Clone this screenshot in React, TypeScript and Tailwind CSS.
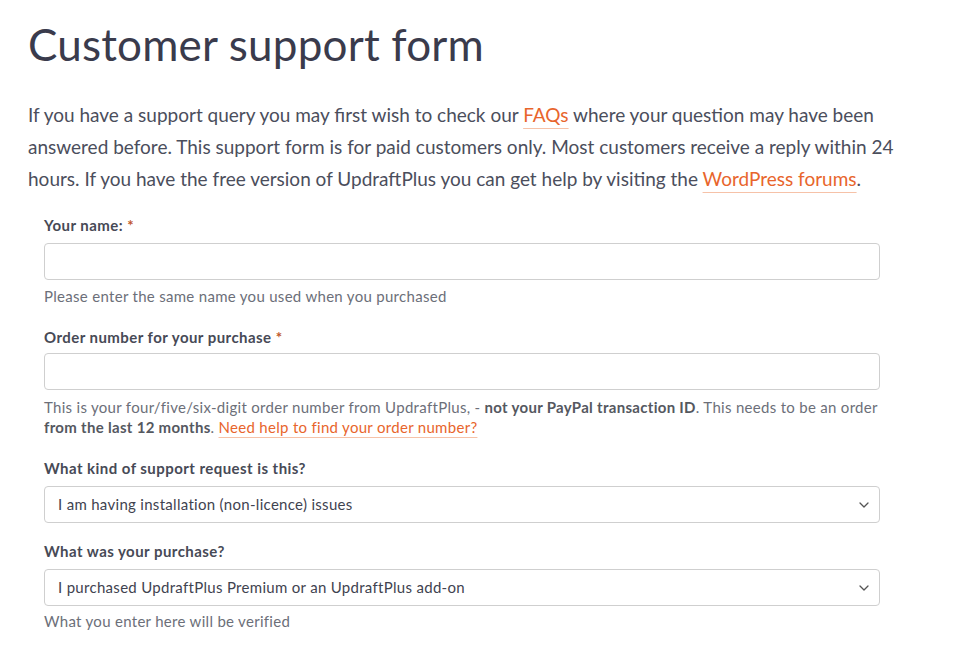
import React from "react";

const font = { fontFamily: "Lato, 'Noto Sans', sans-serif" };

function Chevron() {
  return (
    <svg width="10" height="6" viewBox="0 0 10 6" className="absolute right-[6px] top-1/2 -translate-y-1/2" fill="none">
      <path d="M1 1l4 4 4-4" stroke="#555" strokeWidth="1.3" strokeLinecap="round" strokeLinejoin="round" />
    </svg>
  );
}

function Select({ value }: { value: string }) {
  return (
    <div className="relative h-[37px] w-full rounded-[4px] border border-[#cfcfcf] bg-white">
      <div className="flex h-full items-center px-[13px] text-[15px] tracking-[0.3px] text-[#3f4350]">{value}</div>
      <div className="absolute right-[4px] top-1/2 -translate-y-1/2 h-[20px] w-[18px]">
        <Chevron />
      </div>
    </div>
  );
}

const label = "text-[15px] leading-[20px] font-bold tracking-[0.45px] text-[#474a56]";
const help = "text-[15px] leading-[20px] tracking-[0.3px] text-[#6c6f79]";

export default function App() {
  return (
    <div className="min-h-[645px] w-full bg-white" style={font}>
      <div className="pl-[28px] pt-[17px] w-[900px]">
        <h1 className="text-[44px] leading-[54px] font-normal text-[#3a3b4c] tracking-[0.2px]">Customer support form</h1>
        <p className="mt-[28px] text-[19px] leading-[32px] text-[#4b4e5c] w-[870px]">
          If you have a support query you may first wish to check our{" "}
          <a className="text-[#e8652c] underline decoration-[#f6c2a8] underline-offset-[6px]">FAQs</a> where your question may have been
          answered before. This support form is for paid customers only. Most customers receive a reply within 24
          hours. If you have the free version of UpdraftPlus you can get help by visiting the{" "}
          <a className="text-[#e8652c] underline decoration-[#f6c2a8] underline-offset-[6px]">WordPress forums</a>.
        </p>
        <div className="mt-[20px] pl-[16px] w-[852px] flex flex-col">
          <label className={label}>
            Your name: <span className="text-[#c0562a]">*</span>
          </label>
          <div className="mt-[8px] h-[37px] w-full rounded-[4px] border border-[#cfcfcf] bg-white" />
          <div className={`mt-[6px] ${help}`}>Please enter the same name you used when you purchased</div>

          <label className={`mt-[21px] ${label}`}>
            Order number for your purchase <span className="text-[#c0562a]">*</span>
          </label>
          <div className="mt-[6px] h-[37px] w-full rounded-[4px] border border-[#cfcfcf] bg-white" />
          <div className={`mt-[7px] ${help}`}>
            This is your four/five/six-digit order number from UpdraftPlus, - <b className="text-[#55585f]">not your PayPal transaction ID</b>. This needs to be an order{" "}
            <b className="text-[#55585f]">from the last 12 months</b>.{" "}
            <a className="text-[#e8652c] underline decoration-[#f6c2a8] underline-offset-[4px]">Need help to find your order number?</a>
          </div>

          <label className={`mt-[21px] ${label}`}>What kind of support request is this?</label>
          <div className="mt-[8px]">
            <Select value="I am having installation (non-licence) issues" />
          </div>

          <label className={`mt-[18px] ${label}`}>What was your purchase?</label>
          <div className="mt-[8px]">
            <Select value="I purchased UpdraftPlus Premium or an UpdraftPlus add-on" />
          </div>
          <div className={`mt-[5px] ${help}`}>What you enter here will be verified</div>
        </div>
      </div>
    </div>
  );
}
